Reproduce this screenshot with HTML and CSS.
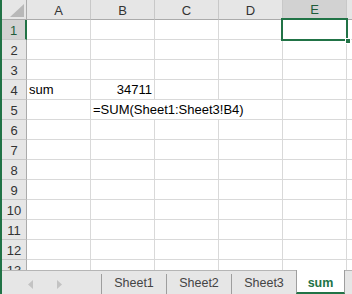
FILE: index.html
```html
<!DOCTYPE html>
<html>
<head>
<meta charset="utf-8">
<link rel="stylesheet" href="styles.css">
</head>
<body>
<div class="window">
  <div class="edge"></div>
  <div class="main">
    <div class="sheet">
      <div class="grid">
        <div class="hd corner"><svg width="14" height="13" viewBox="0 0 14 13"><polygon points="14,0 14,13 0,13" fill="#b8b8b8"/></svg></div>
        <div class="hd col">A</div>
        <div class="hd col">B</div>
        <div class="hd col">C</div>
        <div class="hd col">D</div>
        <div class="hd col sel-col">E</div>
        <div class="hd col"></div>

        <div class="hd row sel-row">1</div><div class="c"></div><div class="c"></div><div class="c"></div><div class="c"></div><div class="c"></div><div class="c"></div>
        <div class="hd row">2</div><div class="c"></div><div class="c"></div><div class="c"></div><div class="c"></div><div class="c"></div><div class="c"></div>
        <div class="hd row">3</div><div class="c"></div><div class="c"></div><div class="c"></div><div class="c"></div><div class="c"></div><div class="c"></div>
        <div class="hd row">4</div><div class="c">sum</div><div class="c num">34711</div><div class="c"></div><div class="c"></div><div class="c"></div><div class="c"></div>
        <div class="hd row">5</div><div class="c"></div><div class="c span3">=SUM(Sheet1:Sheet3!B4)</div><div class="c"></div><div class="c"></div>
        <div class="hd row">6</div><div class="c"></div><div class="c"></div><div class="c"></div><div class="c"></div><div class="c"></div><div class="c"></div>
        <div class="hd row">7</div><div class="c"></div><div class="c"></div><div class="c"></div><div class="c"></div><div class="c"></div><div class="c"></div>
        <div class="hd row">8</div><div class="c"></div><div class="c"></div><div class="c"></div><div class="c"></div><div class="c"></div><div class="c"></div>
        <div class="hd row">9</div><div class="c"></div><div class="c"></div><div class="c"></div><div class="c"></div><div class="c"></div><div class="c"></div>
        <div class="hd row">10</div><div class="c"></div><div class="c"></div><div class="c"></div><div class="c"></div><div class="c"></div><div class="c"></div>
        <div class="hd row">11</div><div class="c"></div><div class="c"></div><div class="c"></div><div class="c"></div><div class="c"></div><div class="c"></div>
        <div class="hd row">12</div><div class="c"></div><div class="c"></div><div class="c"></div><div class="c"></div><div class="c"></div><div class="c"></div>
        <div class="hd row">13</div><div class="c"></div><div class="c"></div><div class="c"></div><div class="c"></div><div class="c"></div><div class="c"></div>
      </div>
      <div class="selection"><div class="handle"></div></div>
    </div>
    <div class="tabbar">
      <div class="nav">
        <svg width="6" height="9" viewBox="0 0 6 9"><polygon points="5,0 5,9 0,4.5" fill="#c3c3c3"/></svg>
        <svg width="6" height="9" viewBox="0 0 6 9"><polygon points="1,0 1,9 6,4.5" fill="#c3c3c3"/></svg>
      </div>
      <div class="tab">Sheet1</div>
      <div class="tab">Sheet2</div>
      <div class="tab">Sheet3</div>
      <div class="tab active">sum</div>
      <div class="tabrest"></div>
    </div>
  </div>
</div>
</body>
</html>
```

FILE: styles.css
```css
* { box-sizing: border-box; }
html, body { margin: 0; padding: 0; background: #fff; }
body {
  font-family: "Liberation Sans", Arial, sans-serif;
  font-size: 13px;
  color: #000;
}
.window {
  display: flex;
  width: 352px;
  height: 294px;
  overflow: hidden;
}
.edge {
  width: 2px;
  background: #217346;
  flex: none;
}
.main {
  flex: 1;
  display: flex;
  flex-direction: column;
  min-width: 0;
}
.sheet {
  position: relative;
  height: 270px;
  overflow: hidden;
  flex: none;
}
.grid {
  display: grid;
  grid-template-columns: 25px repeat(5, 64px) 64px;
  grid-auto-rows: 20px;
}
.hd {
  background: #e6e6e6;
  border-right: 1px solid #c8c8c8;
  border-bottom: 1px solid #c8c8c8;
  color: #333;
  display: flex;
  align-items: center;
  justify-content: center;
  line-height: 1;
}
.corner {
  align-items: flex-end;
  justify-content: flex-end;
  padding: 0 2px 2px 0;
  border-bottom-color: #ababab;
  border-right-color: #ababab;
}
.col {
  border-bottom-color: #ababab;
  padding-top: 1px;
}
.row {
  border-right-color: #ababab;
  padding-top: 2px;
}
.sel-col {
  background: #d2d2d2;
  color: #1e5c3a;
  border-bottom: 2px solid #217346;
}
.sel-row {
  background: #d2d2d2;
  color: #1e5c3a;
  border-right: 2px solid #217346;
}
.c {
  border-right: 1px solid #d9d9d9;
  border-bottom: 1px solid #d9d9d9;
  display: flex;
  align-items: flex-end;
  padding: 0 2px 3px 2px;
  white-space: nowrap;
  line-height: 1;
}
.num { justify-content: flex-end; }
.span3 { grid-column: span 3; overflow: visible; }
.selection {
  position: absolute;
  left: 279px;
  top: 18px;
  width: 67px;
  height: 23px;
  border: 2px solid #217346;
}
.handle {
  position: absolute;
  right: -5px;
  bottom: -5px;
  width: 6px;
  height: 6px;
  background: #217346;
  border: 1px solid #fff;
}
.tabbar {
  flex: 1;
  display: flex;
  background: #e6e6e6;
  border-top: 1px solid #b5b5b5;
  font-size: 12.5px;
  color: #444;
}
.nav {
  width: 100px;
  display: flex;
  align-items: center;
  padding-left: 26px;
  gap: 22px;
  border-right: 1px solid #9e9e9e;
  margin-top: 3px;
}
.tab {
  width: 65px;
  display: flex;
  align-items: center;
  justify-content: center;
  border-right: 1px solid #9e9e9e;
  margin-top: 3px;
  padding-bottom: 2px;
}
.tab.active {
  width: 49px;
  margin-top: -1px;
  padding-top: 3px;
  background: #fff;
  color: #217346;
  font-weight: bold;
  border-left: 1px solid #9e9e9e;
  border-bottom: 2px solid #217346;
  margin-left: -1px;
  padding-bottom: 0;
}
.tabrest { flex: 1; }
```
